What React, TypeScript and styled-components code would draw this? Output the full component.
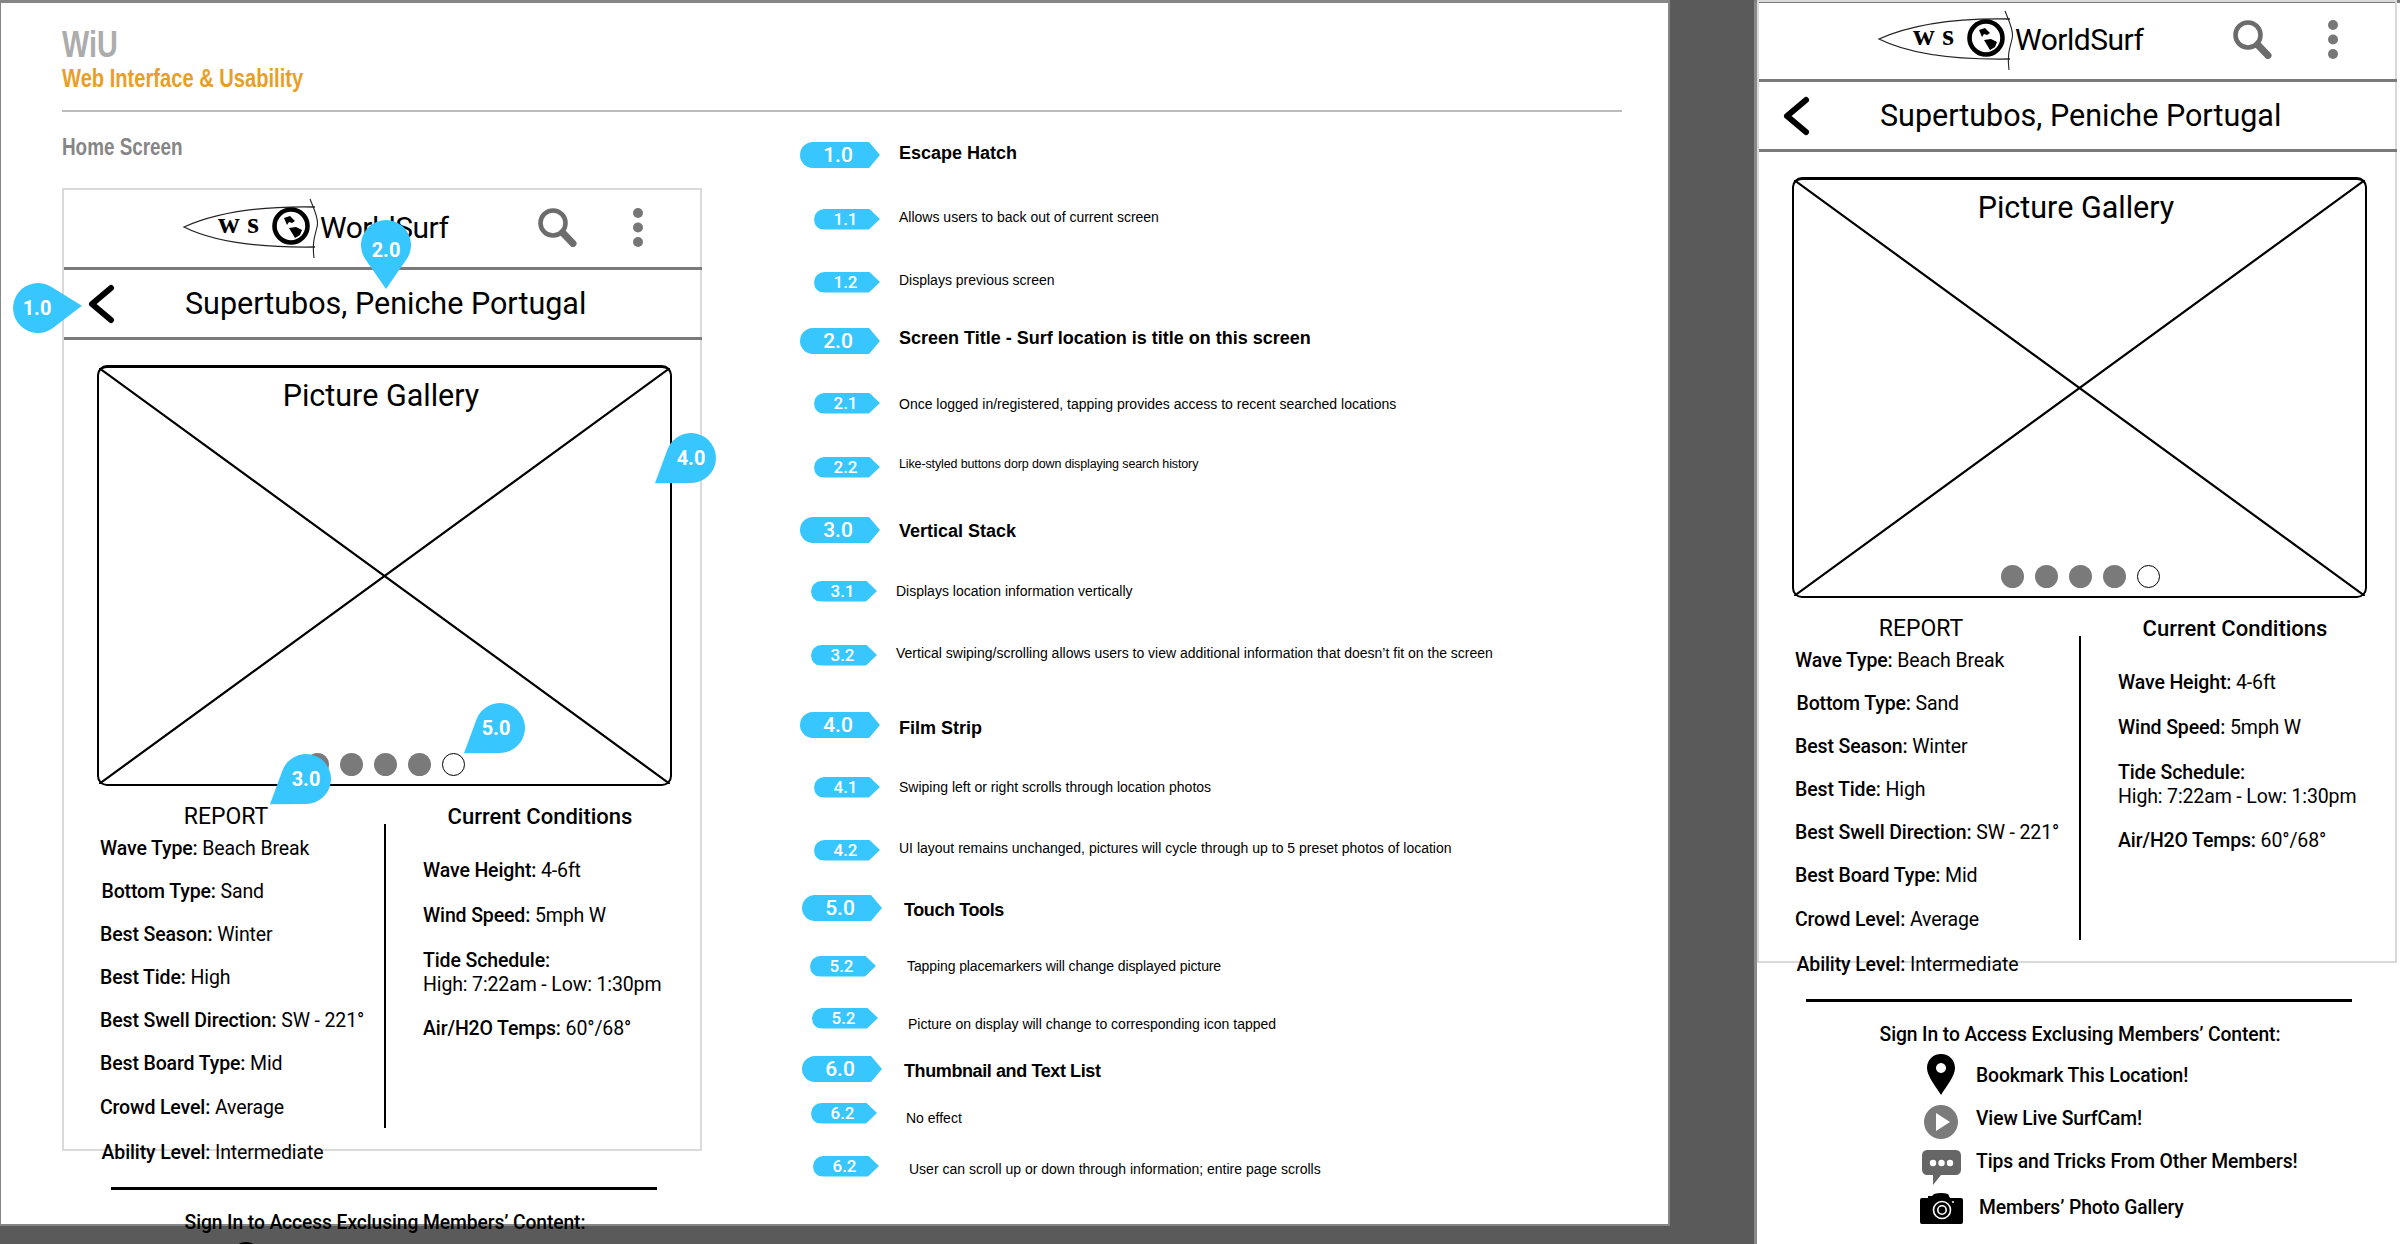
import React from 'react';
import styled, { createGlobalStyle } from 'styled-components';

const GlobalStyle = createGlobalStyle`
    html, body {
        margin: 0;
        padding: 0;
        background: #5a5a5a;
    }
`;

const Page = styled.div`
    display: flex;
    width: 2400px;
    height: 1244px;
    overflow: hidden;
    background: #5a5a5a;
    font-family: Roboto, "Liberation Sans", sans-serif;
    color: #000;
`;

const Sheet = styled.div`
    box-sizing: border-box;
    flex: none;
    width: 1670px;
    height: 1226px;
    padding: 24px 0 0 61px;
    background: #fff;
    border: 2px solid #868686;
    border-top-width: 3px;
    border-left-width: 1px;
`;

const SideSheet = styled.div`
    box-sizing: border-box;
    flex: none;
    width: 646px;
    height: 1244px;
    margin-left: 84px;
    background: #fff;
    border-left: 3px solid #8a8a8a;
    border-top: 3px solid #7a7a7a;
`;

const SideInner = styled.div`
    margin-top: -3px;
`;

const Brand = styled.div`
    font-family: "Liberation Sans", sans-serif;
    font-weight: 700;
    font-size: 36px;
    line-height: 36px;
    color: #acacac;
    transform: scaleX(0.8);
    transform-origin: left;
`;

const Tagline = styled.div`
    margin-top: 2px;
    font-family: "Liberation Sans", sans-serif;
    font-weight: 700;
    font-size: 25px;
    line-height: 26px;
    color: #e99f26;
    transform: scaleX(0.805);
    transform-origin: left;
`;

const HeaderRule = styled.div`
    width: 1560px;
    height: 2px;
    margin-top: 19px;
    background: #bcbcbc;
`;

const Columns = styled.div`
    display: flex;
`;

const MockColumn = styled.div`
    flex: none;
    width: 640px;
`;

const ScreenLabel = styled.div`
    margin: 22px 0 28px;
    font-family: "Liberation Sans", sans-serif;
    font-weight: 700;
    font-size: 23px;
    line-height: 26px;
    color: #868686;
    transform: scaleX(0.82);
    transform-origin: left;
`;

const Notes = styled.div`
    flex: none;
    width: 860px;
    margin-left: 98px;
    font-family: "Liberation Sans", Arial, sans-serif;
`;

const NoteRow = styled.div<{ $mt: number; $pl: number }>`
    display: flex;
    align-items: center;
    height: 26px;
    margin-top: ${p => p.$mt}px;
    padding-left: ${p => p.$pl}px;
`;

const Tag = styled.div<{ $main: boolean }>`
    flex: none;
    box-sizing: border-box;
    display: flex;
    align-items: center;
    justify-content: center;
    width: ${p => (p.$main ? 80 : 66)}px;
    height: ${p => (p.$main ? 26 : 21)}px;
    padding-right: ${p => (p.$main ? 4 : 3)}px;
    background: #38c6fe;
    border-radius: 13px 0 0 13px;
    clip-path: polygon(0 0, calc(100% - 11px) 0, 100% 50%, calc(100% - 11px) 100%, 0 100%);
    font-family: Roboto, sans-serif;
    font-weight: 500;
    font-size: ${p => (p.$main ? 21 : 17)}px;
    color: #fff;
`;

const NoteText = styled.div<{ $main: boolean; $ml: number; $dy: number; $ls: number; $fs: number }>`
    margin-left: ${p => p.$ml}px;
    margin-top: ${p => p.$dy * 2}px;
    font-weight: ${p => (p.$main ? 700 : 400)};
    font-size: ${p => p.$fs}px;
    letter-spacing: ${p => p.$ls}px;
    white-space: nowrap;
`;

/* phone mock, used twice */

const Phone = styled.div`
    position: relative;
    width: 640px;
`;

const Fold = styled.div`
    box-sizing: border-box;
    height: 963px;
    border: 2px solid #dadada;
`;

const Flow = styled.div`
    margin: -2px;
`;

const AppBar = styled.div`
    box-sizing: border-box;
    display: grid;
    grid-template-columns: 118px 138px 218px 39px 56px 10px;
    align-items: center;
    height: 82px;
    margin-left: 2px;
    border-bottom: 3px solid #7a7a7a;
`;

const Wordmark = styled.div`
    font-size: 30px;
    letter-spacing: -0.5px;
    line-height: 40px;
`;

const TitleBar = styled.div`
    box-sizing: border-box;
    display: flex;
    align-items: center;
    height: 70px;
    margin-left: 2px;
    padding-left: 23px;
    border-bottom: 3px solid #7a7a7a;
`;

const ScreenTitle = styled.div`
    margin-left: 70px;
    font-size: 30.5px;
    line-height: 40px;
`;

const Gallery = styled.div`
    position: relative;
    box-sizing: border-box;
    display: flex;
    flex-direction: column;
    align-items: center;
    width: 575px;
    height: 421px;
    margin: 25px 0 0 35px;
    padding: 10px 0 8px;
    border: solid #000;
    border-width: 3px 2.5px 2.5px;
    border-radius: 10px;
`;

const Cross = styled.svg`
    position: absolute;
    top: 0;
    left: 0;
    width: 100%;
    height: 100%;
`;

const GalleryTitle = styled.div`
    position: relative;
    margin-right: 7px;
    font-size: 30.5px;
    line-height: 36px;
`;

const Dots = styled.div`
    position: relative;
    display: flex;
    gap: 11px;
    margin-top: auto;
    margin-left: 2px;
`;

const Dot = styled.span<{ $open: boolean }>`
    box-sizing: border-box;
    width: 23px;
    height: 23px;
    border-radius: 50%;
    background: ${p => (p.$open ? '#fff' : '#7a7a7a')};
    border: ${p => (p.$open ? '1px solid #000' : 'none')};
`;

const Stats = styled.div`
    display: grid;
    grid-template-columns: 322px 2px 1fr;
    margin-top: 18px;
`;

const Report = styled.div`
    padding-left: 38px;
`;

const StatHead = styled.div<{ $w: number; $bold: boolean }>`
    width: ${p => p.$w}px;
    font-size: ${p => (p.$bold ? 22 : 23)}px;
    font-weight: ${p => (p.$bold ? 500 : 400)};
    line-height: 26px;
    text-align: center;
    white-space: nowrap;
`;

const Stat = styled.div<{ $ml?: number; $mt: number }>`
    margin-left: ${p => p.$ml ?? 0}px;
    margin-top: ${p => p.$mt}px;
    font-size: 19.5px;
    line-height: 24px;
    white-space: nowrap;
    letter-spacing: -0.13px;

    b {
        font-weight: 500;
    }
`;

const StatDivider = styled.div`
    width: 2px;
    height: 304px;
    margin-top: 20px;
    background: #000;
`;

const Conditions = styled.div`
    padding-left: 37px;
`;

const BlackRule = styled.div`
    width: 546px;
    height: 3px;
    margin: 22px 0 0 49px;
    background: #000;
`;

const SignIn = styled.div`
    margin-top: 21px;
    width: 646px;
    font-size: 19.3px;
    font-weight: 500;
    line-height: 24px;
    text-align: center;
    letter-spacing: -0.1px;
`;

const Perks = styled.div`
    margin-top: 7px;
`;

const Perk = styled.div<{ $mt?: number }>`
    display: grid;
    grid-template-columns: 48px 1fr;
    column-gap: 11px;
    align-items: center;
    height: 43px;
    margin-top: ${p => p.$mt ?? 0}px;
    padding-left: 160px;
    font-size: 19.3px;
    font-weight: 500;
    letter-spacing: -0.1px;
`;

const PerkIcon = styled.div<{ $dy?: number }>`
    display: flex;
    justify-content: center;
    height: 1px;
    align-items: center;
    margin-top: ${p => (p.$dy ?? 0) * 2}px;
`;

const PerkText = styled.span<{ $ml?: number }>`
    margin-left: ${p => p.$ml ?? 0}px;
    white-space: nowrap;
`;

const PinWrap = styled.div<{ $x: number; $y: number }>`
    position: absolute;
    left: ${p => p.$x - 25}px;
    top: ${p => p.$y - 25}px;
    display: flex;
    align-items: center;
    justify-content: center;
    width: 50px;
    height: 50px;
    color: #fff;
    font-size: 20px;
    font-weight: 700;
`;

const PinShape = styled.svg<{ $angle: number }>`
    position: absolute;
    left: -5px;
    top: -5px;
    overflow: visible;
    transform-origin: 30px 30px;
    transform: rotate(${p => p.$angle}deg);
`;

const PinLabel = styled.span<{ $lx: number; $ly: number }>`
    position: relative;
    margin-top: ${p => p.$ly * 2}px;
    margin-left: ${p => p.$lx * 2}px;
`;

const Pin = ({ x, y, angle, label, lx = 0, ly = 0 }: { x: number; y: number; angle: number; label: string; lx?: number; ly?: number }) => (
    <PinWrap $x={x} $y={y}>
        <PinShape $angle={angle} width="60" height="60" viewBox="-30 -30 60 60">
            <path d="M0 44 L-20.6 14.2 A25 25 0 1 1 20.6 14.2 Z" fill="#38c6fe" />
        </PinShape>
        <PinLabel $lx={lx} $ly={ly}>{label}</PinLabel>
    </PinWrap>
);

const Logo = () => (
    <svg width="138" height="64" viewBox="0 0 138 64" style={{ display: 'block' }}>
        <path d="M133 11 C 85 10, 40 14, 2 31 C 30 45, 70 52, 133 51" fill="none" stroke="#222" strokeWidth="1.3" />
        <path d="M128 3 C 133 15, 137 25, 135 31 C 133 40, 130 45, 132 62" fill="none" stroke="#222" strokeWidth="1.1" />
        <text x="36" y="37" fontFamily="Liberation Serif, serif" fontWeight="700" fontSize="30" textLength="41" lengthAdjust="spacing">w s</text>
        <circle cx="109" cy="30" r="16.5" fill="#fff" stroke="#000" strokeWidth="4.6" />
        <path d="M102 22 L108 20 L113 25 L110 27 L107 26 L105 29 Z" fill="#000" />
        <path d="M107 32 L114 31 L120 34 L118 39 L113 42 L110 37 Z" fill="#000" />
    </svg>
);

const SearchIcon = () => (
    <svg width="39" height="39" viewBox="0 0 39 39" style={{ display: 'block' }}>
        <circle cx="15" cy="15" r="12.5" fill="none" stroke="#6c6c6c" strokeWidth="4.6" />
        <path d="M24.5 24.5 L35 35.5" stroke="#6c6c6c" strokeWidth="7" strokeLinecap="round" />
    </svg>
);

const MoreIcon = () => (
    <svg width="10" height="39" viewBox="0 0 10 39" style={{ display: 'block' }}>
        <circle cx="5" cy="5" r="5" fill="#777" />
        <circle cx="5" cy="19.5" r="5" fill="#777" />
        <circle cx="5" cy="34" r="5" fill="#777" />
    </svg>
);

const BackIcon = () => (
    <svg width="28" height="40" viewBox="0 0 28 40" style={{ display: 'block' }}>
        <path d="M24 4 L5 20 L24 36" fill="none" stroke="#000" strokeWidth="6" strokeLinecap="round" strokeLinejoin="round" />
    </svg>
);

const PlaceIcon = () => (
    <svg width="28" height="41" viewBox="0 0 28 41" style={{ flex: 'none' }}>
        <path fillRule="evenodd" d="M14 0 C 22 0 28 6 28 14 C 28 22 19 33 14 41 C 9 33 0 22 0 14 C 0 6 6 0 14 0 Z M14 9 a5 5 0 1 0 0.01 0 Z" fill="#000" />
    </svg>
);

const PlayIcon = () => (
    <svg width="34" height="34" viewBox="0 0 34 34" style={{ flex: 'none' }}>
        <circle cx="17" cy="17" r="17" fill="#7b7b7b" />
        <path d="M12 8 L26 17 L12 26 Z" fill="#fff" />
    </svg>
);

const ChatIcon = () => (
    <svg width="39" height="35" viewBox="0 0 39 35" style={{ flex: 'none' }}>
        <path d="M6 0 H33 C 37 0 39 2 39 6 V19 C 39 23 37 25 33 25 H19 L11 35 V25 H6 C 2 25 0 23 0 19 V6 C 0 2 2 0 6 0 Z" fill="#666" />
        <circle cx="11" cy="13" r="3.2" fill="#fff" />
        <circle cx="19.5" cy="13" r="3.2" fill="#fff" />
        <circle cx="28" cy="13" r="3.2" fill="#fff" />
    </svg>
);

const CameraIcon = () => (
    <svg width="43" height="31" viewBox="0 0 43 31" style={{ flex: 'none' }}>
        <path d="M2 5 H8 V3 H12 L14 1 Q 21 -1 28 1 L30 5 H41 Q 43 5 43 7 V29 Q 43 31 41 31 H2 Q 0 31 0 29 V7 Q 0 5 2 5 Z" fill="#000" />
        <circle cx="22" cy="17" r="8.5" fill="none" stroke="#fff" strokeWidth="1.6" />
        <circle cx="22" cy="17" r="4.2" fill="none" stroke="#fff" strokeWidth="1.6" />
        <circle cx="33" cy="9" r="1" fill="#fff" />
    </svg>
);

const report = [
    { k: 'Wave Type', v: 'Beach Break', mt: 7 },
    { k: 'Bottom Type', v: 'Sand', mt: 19, ml: 1.5 },
    { k: 'Best Season', v: 'Winter', mt: 19 },
    { k: 'Best Tide', v: 'High', mt: 19 },
    { k: 'Best Swell Direction', v: 'SW - 221°', mt: 19 },
    { k: 'Best Board Type', v: 'Mid', mt: 19 },
    { k: 'Crowd Level', v: 'Average', mt: 20 },
    { k: 'Ability Level', v: 'Intermediate', mt: 21, ml: 1.5 },
];

const MockScreen: React.FC<{ children?: React.ReactNode }> = ({ children }) => (
    <Phone>
        <Fold>
            <Flow>
                <AppBar>
                    <span />
                    <Logo />
                    <Wordmark>WorldSurf</Wordmark>
                    <SearchIcon />
                    <span />
                    <MoreIcon />
                </AppBar>
                <TitleBar>
                    <BackIcon />
                    <ScreenTitle>Supertubos, Peniche Portugal</ScreenTitle>
                </TitleBar>
                <Gallery>
                    <Cross viewBox="0 0 569 414" preserveAspectRatio="none">
                        <path d="M0 0 L569 414 M569 0 L0 414" stroke="#000" strokeWidth="2.2" />
                    </Cross>
                    <GalleryTitle>Picture Gallery</GalleryTitle>
                    <Dots>
                        {[0, 1, 2, 3, 4].map(i => <Dot key={i} $open={i === 4} />)}
                    </Dots>
                </Gallery>
                <Stats>
                    <Report>
                        <StatHead $w={252} $bold={false}>REPORT</StatHead>
                        {report.map(r => (
                            <Stat key={r.k} $mt={r.mt} $ml={r.ml}><b>{r.k}:</b> {r.v}</Stat>
                        ))}
                    </Report>
                    <StatDivider />
                    <Conditions>
                        <StatHead $w={234} $bold>Current Conditions</StatHead>
                        <Stat $mt={29}><b>Wave Height:</b> 4-6ft</Stat>
                        <Stat $mt={21}><b>Wind Speed:</b> 5mph W</Stat>
                        <Stat $mt={21}><b>Tide Schedule:</b><br />High: 7:22am - Low: 1:30pm</Stat>
                        <Stat $mt={20}><b>Air/H2O Temps:</b> 60°/68°</Stat>
                    </Conditions>
                </Stats>
                <BlackRule />
                <SignIn>Sign In to Access Exclusing Members’ Content:</SignIn>
                <Perks>
                    <Perk>
                        <PerkIcon $dy={-1}><PlaceIcon /></PerkIcon>
                        <PerkText>Bookmark This Location!</PerkText>
                    </Perk>
                    <Perk>
                        <PerkIcon $dy={3}><PlayIcon /></PerkIcon>
                        <PerkText>View Live SurfCam!</PerkText>
                    </Perk>
                    <Perk>
                        <PerkIcon $dy={6}><ChatIcon /></PerkIcon>
                        <PerkText>Tips and Tricks From Other Members!</PerkText>
                    </Perk>
                    <Perk $mt={3}>
                        <PerkIcon $dy={1}><CameraIcon /></PerkIcon>
                        <PerkText $ml={3}>Members’ Photo Gallery</PerkText>
                    </Perk>
                </Perks>
            </Flow>
        </Fold>
        {children}
    </Phone>
);

type Note = {
    tag: string;
    text: string;
    y: number;
    x?: number;
    tx?: number;
    dy?: number;
    ls?: number;
    fs?: number;
};

// y = centre of the tag on the sheet, x / tx = left edge of tag and text
const notes: Note[] = [
    { tag: '1.0', text: 'Escape Hatch', y: 155, dy: -2 },
    { tag: '1.1', text: 'Allows users to back out of current screen', y: 219, dy: -2 },
    { tag: '1.2', text: 'Displays previous screen', y: 282, dy: -2 },
    { tag: '2.0', text: 'Screen Title - Surf location is title on this screen', y: 341, dy: -3 },
    { tag: '2.1', text: 'Once logged in/registered, tapping provides access to recent searched locations', y: 403, dy: 1 },
    { tag: '2.2', text: 'Like-styled buttons dorp down displaying search history', y: 467, dy: -3, ls: -0.13, fs: 12.5 },
    { tag: '3.0', text: 'Vertical Stack', y: 530, dy: 1 },
    { tag: '3.1', text: 'Displays location information vertically', y: 591, x: 811, tx: 896 },
    { tag: '3.2', text: 'Vertical swiping/scrolling allows users to view additional information that doesn’t fit on the screen', y: 655, x: 811, tx: 896, dy: -2 },
    { tag: '4.0', text: 'Film Strip', y: 725, dy: 3 },
    { tag: '4.1', text: 'Swiping left or right scrolls through location photos', y: 787 },
    { tag: '4.2', text: 'UI layout remains unchanged, pictures will cycle through up to 5 preset photos of location', y: 850, dy: -2 },
    { tag: '5.0', text: 'Touch Tools', y: 908, x: 802, tx: 904, dy: 2, ls: -0.4 },
    { tag: '5.2', text: 'Tapping placemarkers will change displayed picture', y: 966, x: 810, tx: 907, ls: -0.1 },
    { tag: '5.2', text: 'Picture on display will change to corresponding icon tapped', y: 1018, x: 812, tx: 908, dy: 6 },
    { tag: '6.0', text: 'Thumbnail and Text List', y: 1069, x: 802, tx: 904, dy: 2, ls: -0.4 },
    { tag: '6.2', text: 'No effect', y: 1113, x: 811, tx: 906, dy: 5 },
    { tag: '6.2', text: 'User can scroll up or down through information; entire page scrolls', y: 1166, x: 813, tx: 909, dy: 3 },
];

const App: React.FC = () => (
    <Page>
        <GlobalStyle />
        <Sheet>
            <Brand>WiU</Brand>
            <Tagline>Web Interface &amp; Usability</Tagline>
            <HeaderRule />
            <Columns>
                <MockColumn>
                    <ScreenLabel>Home Screen</ScreenLabel>
                    <MockScreen>
                        <Pin x={-24} y={120} angle={-93} label="1.0" lx={-1} />
                        <Pin x={324} y={57} angle={0} label="2.0" ly={5} />
                        <Pin x={629} y={270} angle={55} label="4.0" />
                        <Pin x={438} y={540} angle={55} label="5.0" lx={-4} />
                        <Pin x={244} y={591} angle={55} label="3.0" />
                    </MockScreen>
                </MockColumn>
                <Notes>
                    {notes.map((n, i) => {
                        const main = n.tag.endsWith('.0');
                        const x = n.x ?? (main ? 800 : 814);
                        const prev = i === 0 ? 99 : notes[i - 1].y;
                        return (
                            <NoteRow key={i} $mt={n.y - prev - 26} $pl={x - 800}>
                                <Tag $main={main}>{n.tag}</Tag>
                                <NoteText
                                    $main={main}
                                    $ml={(n.tx ?? 899) - x - (main ? 80 : 66)}
                                    $dy={n.dy ?? 0}
                                    $ls={n.ls ?? 0}
                                    $fs={n.fs ?? (main ? 18 : 14)}
                                >
                                    {n.text}
                                </NoteText>
                            </NoteRow>
                        );
                    })}
                </Notes>
            </Columns>
        </Sheet>
        <SideSheet>
            <SideInner>
                <MockScreen />
            </SideInner>
        </SideSheet>
    </Page>
);

export default App;
